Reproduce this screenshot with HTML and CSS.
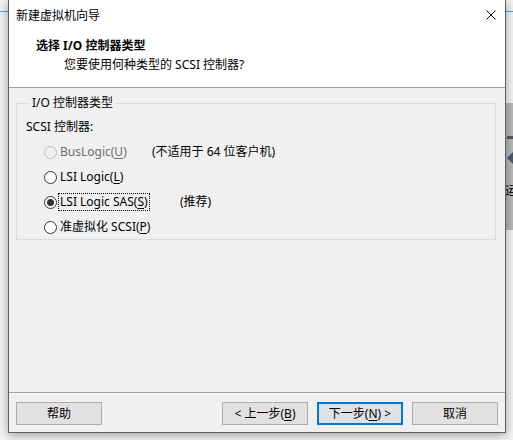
FILE: index.html
```html
<!DOCTYPE html>
<html lang="zh-CN">
<head>
<meta charset="utf-8">
<title>新建虚拟机向导</title>
<link rel="stylesheet" href="styles.css">
</head>
<body>
<div class="desk">
  <div class="bg-line"></div>
  <div class="side">
    <div class="side-panel">
      <span class="dash"></span>
      <span class="arrow"></span>
      <span class="side-ch">运</span>
    </div>
  </div>
  <div class="window">
    <div class="titlebar">
      <span class="title">新建虚拟机向导</span>
      <svg class="close" width="10" height="10" viewBox="0 0 10 10"><path d="M0.5 0.5 L9.5 9.5 M9.5 0.5 L0.5 9.5" stroke="#000" stroke-width="1" fill="none"/></svg>
    </div>
    <div class="header">
      <div class="h-title">选择 I/O 控制器类型</div>
      <div class="h-sub">您要使用何种类型的 SCSI 控制器?</div>
    </div>
    <div class="content">
      <fieldset class="group">
        <legend class="legend">I/O 控制器类型</legend>
        <div class="label">SCSI 控制器:</div>
        <div class="radios">
          <div class="row disabled">
            <span class="opt opt-a"><span class="radio"></span><span class="rtext">BusLogic(<u>U</u>)</span></span>
            <span class="note">(不适用于 64 位客户机)</span>
          </div>
          <div class="row">
            <span class="opt"><span class="radio"></span><span class="rtext">LSI Logic(<u>L</u>)</span></span>
          </div>
          <div class="row">
            <span class="opt opt-b"><span class="radio checked"></span><span class="rtext focus">LSI Logic SAS(<u>S</u>)</span></span>
            <span class="note">(推荐)</span>
          </div>
          <div class="row">
            <span class="opt"><span class="radio"></span><span class="rtext">准虚拟化 SCSI(<u>P</u>)</span></span>
          </div>
        </div>
      </fieldset>
    </div>
    <div class="footer">
      <button class="btn">帮助</button>
      <div class="spacer"></div>
      <button class="btn">&lt; 上一步(<u>B</u>)</button>
      <button class="btn primary">下一步(<u>N</u>) &gt;</button>
      <button class="btn">取消</button>
    </div>
  </div>
</div>
</body>
</html>
```

FILE: styles.css
```css
* { box-sizing: border-box; }
html, body { margin: 0; padding: 0; }
body {
  font-family: "Noto Sans", "Noto Sans CJK SC", sans-serif;
  font-size: 12px;
  color: #000;
  background: #f3f3f3;
}
.desk {
  position: relative;
  width: 513px;
  height: 440px;
  overflow: hidden;
  background: #f2f2f2;
}
.bg-line {
  height: 1px;
  margin-top: 11px;
  background: #5b9bd5;
}
.side {
  position: absolute;
  left: 505px;
  top: 0;
  width: 8px;
  height: 440px;
  padding-top: 103px;
}
.side-panel {
  position: relative;
  height: 127px;
  background: #b8b8b8;
}
.dash {
  position: absolute;
  left: 2px;
  top: 33px;
  width: 6px;
  height: 3px;
  background: #4a5a6a;
}
.arrow {
  position: absolute;
  left: 2px;
  top: 49px;
  width: 0;
  height: 0;
  border-top: 6px solid transparent;
  border-bottom: 6px solid transparent;
  border-right: 6px solid #4a5a6a;
}
.side-ch {
  position: absolute;
  left: 0;
  top: 80px;
  font-size: 12px;
  line-height: 16px;
}
.window {
  position: absolute;
  left: 8px;
  top: 0;
  width: 498px;
  height: 433px;
  border: 1px solid #5f5f5f;
  border-top: none;
  background: #f0f0f0;
  box-shadow: 0 2px 9px rgba(0, 0, 0, 0.35);
  display: flex;
  flex-direction: column;
}
.titlebar {
  height: 30px;
  background: #fff;
  display: flex;
  align-items: center;
  justify-content: space-between;
  padding: 0 9px 0 7px;
}
.title {
  line-height: 16px;
  padding-top: 1px;
}
.close { display: block; margin-right: 0; }
.header {
  height: 58px;
  background: #fff;
  border-bottom: 1px solid #a0a0a0;
  padding-top: 8px;
}
.h-title {
  font-weight: bold;
  line-height: 16px;
  padding-left: 27px;
}
.h-sub {
  line-height: 16px;
  padding-left: 55px;
  margin-top: 3px;
}
.content {
  height: 304px;
  padding: 7px 0 0 7px;
}
.group {
  margin: 0;
  width: 480px;
  border: 1px solid #dcdcdc;
  padding: 8px 8px 3px 9px;
}
.legend {
  padding: 0 2px;
  margin-left: 4px;
  line-height: 16px;
}
.label {
  line-height: 16px;
}
.radios {
  display: flex;
  flex-direction: column;
  gap: 7px;
  margin-top: 8px;
  margin-left: 18px;
}
.row {
  height: 18px;
  display: flex;
  align-items: center;
}
.opt {
  display: flex;
  align-items: center;
}
.opt-a { width: 108px; }
.opt-b { width: 136px; }
.radio {
  width: 13px;
  height: 13px;
  border: 1px solid #333;
  border-radius: 50%;
  background: #fff;
  display: flex;
  align-items: center;
  justify-content: center;
  flex: none;
}
.radio.checked::after {
  content: "";
  width: 7px;
  height: 7px;
  border-radius: 50%;
  background: #333;
}
.rtext {
  margin-left: 2px;
  line-height: 16px;
  padding: 0 1px;
}
.rtext.focus {
  outline: 1px dotted #000;
}
.disabled .radio {
  border-color: #bcbcbc;
  background: #f0f0f0;
}
.disabled .rtext { color: #6d6d6d; }
.note { line-height: 16px; }
.footer {
  border-top: 1px solid #a0a0a0;
  padding: 9px 7px 7px 7px;
  display: flex;
  align-items: center;
  gap: 9px;
}
.spacer { flex: 1; }
.btn {
  width: 86px;
  height: 23px;
  margin: 0;
  padding: 0;
  font-family: "Noto Sans", "Noto Sans CJK SC", sans-serif;
  font-size: 12px;
  line-height: 16px;
  color: #000;
  background: #e1e1e1;
  border: 1px solid #adadad;
  border-radius: 0;
}
.btn.primary {
  border: 2px solid #0078d7;
}
u { text-decoration: underline; text-underline-offset: 2px; }
```
